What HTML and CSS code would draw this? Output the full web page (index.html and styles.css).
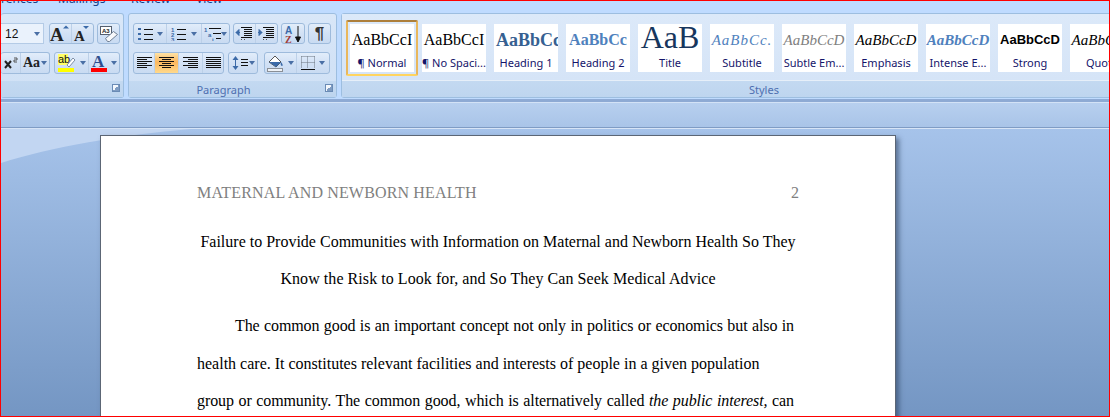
FILE: index.html
```html
<!DOCTYPE html>
<html lang="en">
<head>
  <meta charset="UTF-8" />
  <title>Maternal and Newborn Health - Word</title>
  <link rel="stylesheet" href="styles.css">
</head>
<body>
  <div class="app">
    <div class="tabs">
      <span class="tab tab-refs">rences</span>
      <span class="tab tab-mail">Mailings</span>
      <span class="tab tab-review">Review</span>
      <span class="tab tab-view">View</span>
    </div>

    <div class="ribbon">
      <div class="group group-font">
        <div class="rows">
          <div class="row row-top">
            <div class="size-box"><span>12</span><i class="caret"></i></div>
            <div class="btns btns-grow">
              <div class="btn w-22"><svg width="20" height="18" viewBox="0 0 20 18"><text x="0" y="16" class="glyph glyph-big">A</text><path d="M13 3.5h6L16 .5z" fill="#3b6aa8"/></svg></div>
              <div class="btn w-22"><svg width="18" height="18" viewBox="0 0 18 18"><text x="1" y="16" class="glyph glyph-mid">A</text><path d="M10 1h6l-3 3z" fill="#3b6aa8"/></svg></div>
            </div>
            <div class="btns btn-clear"><svg width="20" height="18" viewBox="0 0 20 18"><rect x="1.5" y="1.5" width="11" height="8" fill="#fff" stroke="#555f6e"/><text x="3" y="8" class="glyph glyph-tiny">A3</text><path d="M6.5 13.5l8-7 4 3-8 7h-2z" fill="#f7f8fa" stroke="#6f7f94"/></svg></div>
          </div>
          <div class="row row-bottom">
            <div class="btns btns-case">
              <div class="btn w-sup"><svg width="14" height="12" viewBox="0 0 14 12"><path d="M1 4l6 7M7 4l-6 7" stroke="#222" stroke-width="2"/><path d="M10 1h3v2h-3v2h3" fill="none" stroke="#555"/></svg></div>
              <div class="btn w-case"><span class="case-label">Aa</span><i class="caret"></i></div>
            </div>
            <div class="btns btns-colour">
              <div class="btn w-high">
                <svg width="18" height="19" viewBox="0 0 18 19"><rect x="0" y="0" width="10" height="11" fill="#ffff66"/><text x="0" y="9" class="glyph glyph-ab">ab</text><path d="M9 11l6-7 2 2-6 7z" fill="#fff" stroke="#7d8ea5"/><rect x="0" y="14" width="16" height="4" fill="#ffff00"/></svg>
                <i class="caret"></i>
              </div>
              <div class="btn w-colour">
                <svg width="16" height="19" viewBox="0 0 16 19"><text x="1" y="13" class="glyph glyph-color">A</text><rect x="0" y="14" width="16" height="4" fill="#ff0000"/></svg>
                <i class="caret"></i>
              </div>
            </div>
          </div>
        </div>
        <div class="group-label"><i class="launcher"></i></div>
      </div>

      <div class="group group-para">
        <div class="rows">
          <div class="row row-top">
            <div class="btns">
              <div class="btn w-bullets">
                <svg width="16" height="14" viewBox="0 0 16 14"><path d="M1 1h3v2H1zM1 6h3v2H1zM1 11h3v2H1z" fill="#3b6aa8"/><path d="M7 2.5h9M7 7.5h9M7 12.5h9" stroke="#111"/></svg>
                <i class="caret"></i>
              </div>
              <div class="btn w-numbers">
                <svg width="16" height="14" viewBox="0 0 16 14"><text x="0" y="5" class="glyph glyph-num">1</text><text x="0" y="10" class="glyph glyph-num">2</text><text x="0" y="15" class="glyph glyph-num">3</text><path d="M6 2.5h9M6 7.5h9M6 12.5h9" stroke="#111"/></svg>
                <i class="caret"></i>
              </div>
              <div class="btn w-multi">
                <svg width="17" height="14" viewBox="0 0 17 14"><text x="0" y="5" class="glyph glyph-num">1</text><text x="4" y="10" class="glyph glyph-num">a</text><text x="8" y="15" class="glyph glyph-num">i</text><path d="M5 1.5h12M9 6.5h8M12 11.5h5" stroke="#111"/></svg>
                <i class="caret caret-tight"></i>
              </div>
            </div>
            <div class="btns">
              <div class="btn w-22"><svg width="18" height="14" viewBox="0 0 18 14"><path d="M6 .5h11M9 2.5h8M9 4.5h8M9 6.5h8M9 8.5h8M6 10.5h11" stroke="#111"/><path d="M1 5.5h4M1 5.5l3-3v6z" fill="#3b6aa8" stroke="#3b6aa8"/><path d="M6 12.5h1M9 12.5h1" stroke="#555"/></svg></div>
              <div class="btn w-22"><svg width="18" height="14" viewBox="0 0 18 14"><path d="M6 .5h11M9 2.5h8M9 4.5h8M9 6.5h8M9 8.5h8M6 10.5h11" stroke="#111"/><path d="M1 5.5h4M5 5.5l-3-3v6z" fill="#3b6aa8" stroke="#3b6aa8"/><path d="M6 12.5h1M9 12.5h1" stroke="#555"/></svg></div>
            </div>
            <div class="btns btn-sort"><svg width="18" height="18" viewBox="0 0 18 18"><text x="1" y="9" class="glyph glyph-az-a">A</text><text x="1" y="18" class="glyph glyph-az-z">Z</text><path d="M14 1v15M11.5 12l2.5 5 2.5-5z" stroke="#111" fill="#111"/></svg></div>
            <div class="btns btn-pil"><span class="pilcrow">¶</span></div>
          </div>
          <div class="row row-bottom">
            <div class="btns">
              <div class="btn w-align"><svg width="15" height="12" viewBox="0 0 15 12"><path d="M0 .5h15M0 2.5h10M0 4.5h15M0 6.5h10M0 8.5h15M0 10.5h10" stroke="#111"/></svg></div>
              <div class="btn w-align-on"><svg width="15" height="12" viewBox="0 0 15 12"><path d="M0 .5h15M3 2.5h9M0 4.5h15M3 6.5h9M0 8.5h15M3 10.5h9" stroke="#111"/></svg></div>
              <div class="btn w-align-on-next"><svg width="15" height="12" viewBox="0 0 15 12"><path d="M0 .5h15M5 2.5h10M0 4.5h15M5 6.5h10M0 8.5h15M5 10.5h10" stroke="#111"/></svg></div>
              <div class="btn w-align-end"><svg width="15" height="12" viewBox="0 0 15 12"><path d="M0 .5h15M0 2.5h15M0 4.5h15M0 6.5h15M0 8.5h15M0 10.5h15" stroke="#111"/></svg></div>
            </div>
            <div class="btns">
              <div class="btn w-spacing">
                <svg width="16" height="16" viewBox="0 0 16 16"><path d="M3.5 1L.5 5h6zM3.5 15L.5 11h6z" fill="#3b6aa8"/><path d="M3.5 5v6" stroke="#3b6aa8"/><path d="M9 4.5h7M9 7.5h7M9 10.5h7" stroke="#111"/></svg>
                <i class="caret caret-tight"></i>
              </div>
            </div>
            <div class="btns btns-shade">
              <div class="btn w-shade">
                <svg width="17" height="18" viewBox="0 0 17 18"><path d="M2 8l6-6 6 6-5 5z" fill="#fff" stroke="#555"/><path d="M14 8c2 2 2 4 1 4s-2-2-1-4z" fill="#3b6aa8"/><path d="M2 8h12l-5 5z" fill="#3b6aa8"/><rect x="0.5" y="14.5" width="15" height="3" fill="#eef2f7" stroke="#8a8f96"/></svg>
                <i class="caret"></i>
              </div>
              <div class="btn w-border">
                <svg width="14" height="14" viewBox="0 0 14 14"><path d="M.5 .5h13M.5 6.5h13M.5 .5v12M6.5 .5v12M13.5 .5v12" fill="none" stroke="#6b7480" stroke-dasharray="1 1"/><path d="M0 13.5h14" stroke="#111"/></svg>
                <i class="caret"></i>
              </div>
            </div>
          </div>
        </div>
        <div class="group-label label-para">Paragraph<i class="launcher"></i></div>
      </div>

      <div class="group group-styles">
        <div class="gallery">
          <div class="style style-on"><div class="swatch"><div class="preview">AaBbCcI</div><div class="caption">¶ Normal</div></div></div>
          <div class="style"><div class="swatch"><div class="preview">AaBbCcI</div><div class="caption">¶ No Spaci...</div></div></div>
          <div class="style"><div class="swatch"><div class="preview p-h1">AaBbCc</div><div class="caption">Heading 1</div></div></div>
          <div class="style"><div class="swatch"><div class="preview p-h2">AaBbCc</div><div class="caption">Heading 2</div></div></div>
          <div class="style"><div class="swatch"><div class="preview p-title">AaB</div><div class="caption">Title</div></div></div>
          <div class="style"><div class="swatch"><div class="preview p-sub">AaBbCc.</div><div class="caption">Subtitle</div></div></div>
          <div class="style"><div class="swatch"><div class="preview p-subtle">AaBbCcD</div><div class="caption">Subtle Em...</div></div></div>
          <div class="style"><div class="swatch"><div class="preview p-em">AaBbCcD</div><div class="caption">Emphasis</div></div></div>
          <div class="style"><div class="swatch"><div class="preview p-intense">AaBbCcD</div><div class="caption">Intense E...</div></div></div>
          <div class="style"><div class="swatch"><div class="preview p-strong">AaBbCcD</div><div class="caption">Strong</div></div></div>
          <div class="style"><div class="swatch"><div class="preview p-em">AaBbCcD</div><div class="caption">Quote</div></div></div>
        </div>
        <div class="group-label label-styles">Styles</div>
      </div>
    </div>

    <div class="ruler-band"></div>

    <div class="workspace">
      <svg class="swoosh" width="260" height="40" viewBox="0 0 260 40"><path d="M0 0H190C120 6 50 18 0 34z" fill="#c2d6f2"/></svg>
      <div class="page">
        <div class="page-header"><span class="running-head">MATERNAL AND NEWBORN HEALTH</span><span>2</span></div>
        <div class="doc-title">
          <div class="title-line">Failure to Provide Communities with Information on Maternal and Newborn Health So They</div>
          <div class="title-line title-wide">Know the Risk to Look for, and So They Can Seek Medical Advice</div>
        </div>
        <div class="doc-body">
          <div class="line line-just line-indent">The common good is an important concept not only in politics or economics but also in</div>
          <div class="line">health care. It constitutes relevant facilities and interests of people in a given population</div>
          <div class="line line-just">group or community. The common good, which is alternatively called <em>the public interest,</em> can</div>
        </div>
      </div>
    </div>
  </div>
</body>
</html>
```

FILE: styles.css
```css
* {
  box-sizing: border-box;
}
html, body {
  margin: 0;
  height: 100%;
}
body {
  font-family: 'Liberation Serif', serif;
  background: #bfdbff;
}
.app {
  width: 1110px;
  height: 417px;
  border: 1px solid #ff0000;
  display: flex;
  flex-direction: column;
  overflow: hidden;
  background: #bfdbff;
}

/* tab strip, only the bottom of the text shows */
.tabs {
  height: 9px;
  flex: none;
  display: flex;
  overflow: hidden;
  font-family: 'Noto Sans', sans-serif;
  font-size: 12px;
  line-height: 14px;
  color: #15428b;
}
.tab {
  margin-top: -9px;
}
.tab-refs { width: 57px; }
.tab-mail { width: 73px; }
.tab-review { width: 65px; }

/* ribbon */
.ribbon {
  height: 89px;
  flex: none;
  display: flex;
  gap: 4px;
  padding-top: 3px;
}
.group {
  height: 85px;
  flex: none;
  display: flex;
  flex-direction: column;
  border: 1px solid #9dbee0;
  border-radius: 3px;
  background: linear-gradient(#d9e7f8, #d2e2f6 60%, #d0e1f5);
}
.group-font {
  width: 123px;
  border-left: none;
}
.group-para {
  width: 209px;
}
.group-styles {
  width: 790px;
}
.rows {
  flex: 1;
  padding-top: 9px;
  display: flex;
  flex-direction: column;
  gap: 8px;
}
.group-para .rows {
  padding-left: 4px;
}
.row {
  display: flex;
}
.row-top {
  height: 21px;
}
.row-bottom {
  height: 22px;
}
.group-font .row-top { gap: 5px; }
.group-font .row-bottom { gap: 4px; }
.group-para .row-top { gap: 3px; }
.group-para .row-bottom { gap: 4px; }
.group-label {
  height: 16px;
  flex: none;
  display: flex;
  justify-content: center;
  align-items: center;
  position: relative;
  font-family: 'Noto Sans', sans-serif;
  font-size: 11px;
  color: #4e6fb0;
  background: linear-gradient(#c3d9f1, #bed5ef);
}
.label-para {
  padding-right: 18px;
}
.launcher {
  position: absolute;
  right: 3px;
  top: 3px;
  width: 8px;
  height: 8px;
  border: 1px solid #6a8bb5;
  background: linear-gradient(135deg, #f3f7fc 50%, #7f9cc2 50%);
}

/* buttons */
.btns {
  display: flex;
  border: 1px solid #9ebbdc;
  border-radius: 3px;
  background: linear-gradient(#e2edfa, #d2e1f5 50%, #c9dbf2);
}
.btn {
  display: flex;
  align-items: center;
  justify-content: center;
  gap: 3px;
  border-right: 1px solid #bcd0e8;
}
.btn:last-child {
  border-right: none;
}
.caret {
  width: 0;
  height: 0;
  margin-left: 4px;
  border-left: 3.5px solid transparent;
  border-right: 3.5px solid transparent;
  border-top: 4px solid #4a6fa5;
}
.caret-tight {
  margin-left: 0;
}
.glyph {
  font-family: 'Liberation Serif', serif;
  font-weight: bold;
}
.glyph-big { font-size: 19px; fill: #222; }
.glyph-mid { font-size: 15px; fill: #222; }
.glyph-tiny { font-family: 'Liberation Sans', sans-serif; font-size: 6px; fill: #222; font-weight: bold; }
.glyph-ab { font-family: 'Liberation Sans', sans-serif; font-size: 11px; fill: #111; font-weight: normal; }
.glyph-color { font-size: 17px; fill: #2f4f8f; }
.glyph-num { font-family: 'Liberation Sans', sans-serif; font-size: 6px; fill: #3b6aa8; }
.glyph-az-a { font-family: 'Liberation Sans', sans-serif; font-size: 10px; fill: #3b6aa8; }
.glyph-az-z { font-size: 10px; fill: #a03a3a; }
.size-box {
  width: 43px;
  display: flex;
  align-items: center;
  justify-content: space-between;
  padding: 0 3px 0 4px;
  border: 1px solid #b4cbe6;
  border-left: none;
  background: #eaf2fc;
  font-family: 'Liberation Sans', sans-serif;
  font-size: 12px;
  color: #111;
}
.w-22 { width: 21.5px; }
.btns-grow { width: 45px; }
.btn-clear { width: 23px; align-items: center; justify-content: center; margin-left: -2px; }
.btns-case { width: 49px; border-left: none; }
.w-sup { width: 20px; }
.w-case { width: 28px; gap: 0; }
.case-label {
  font-family: 'Liberation Serif', serif;
  font-weight: bold;
  font-size: 14px;
  color: #222;
}
.w-case .caret { margin-left: 1px; }
.btns-colour { width: 66px; }
.w-high { width: 34px; gap: 0; }
.w-colour { width: 30px; gap: 0; }
.w-bullets { width: 33px; gap: 0; }
.w-numbers { width: 35px; gap: 0; }
.w-multi { width: 27px; gap: 0; }
.btn-sort { width: 24px; align-items: center; justify-content: center; }
.btn-pil { width: 23px; align-items: center; justify-content: center; }
.pilcrow {
  font-family: 'Liberation Sans', sans-serif;
  font-size: 17px;
  font-weight: bold;
  color: #333;
}
.w-align { width: 21px; }
.w-align-on { width: 24px; background: linear-gradient(#ffe3a6, #fbb75e 45%, #ffd98c); }
.w-align-on-next { width: 24px; }
.w-align-end { width: 20px; }
.w-spacing { width: 28px; gap: 1px; }
.btns-shade { margin-left: 2px; }
.w-shade { width: 32px; gap: 0; }
.w-border { width: 32px; gap: 0; }

/* styles gallery */
.gallery {
  flex: 1;
  display: flex;
  padding: 6px 0 0 4px;
  background: linear-gradient(#dce9f9, #d5e4f7);
  border-bottom: 1px solid #e6eff9;
  box-shadow: 0 1px 0 #b2cbe6;
}
.style {
  width: 72px;
  height: 56px;
  padding: 4px;
  flex: none;
}
.style-on {
  border: 2px solid;
  border-color: #ad7f3b #e9b75c #ffd45f #e9b75c;
  border-radius: 2px;
  padding: 2px;
}
.swatch {
  height: 48px;
  background: #fff;
  display: flex;
  flex-direction: column;
  overflow: hidden;
}
.preview {
  height: 26px;
  flex: none;
  display: flex;
  align-items: flex-end;
  justify-content: center;
  overflow: hidden;
  white-space: nowrap;
  font-size: 16px;
  line-height: 20px;
  color: #000;
}
.p-h1 { justify-content: flex-start; padding-left: 2px; font-weight: bold; color: #366091; font-size: 18px; }
.p-h2 { font-weight: bold; color: #4f81bd; font-size: 16px; }
.p-title { font-size: 32px; line-height: 26px; color: #17365d; }
.p-sub { font-style: italic; color: #4f81bd; font-size: 15px; letter-spacing: 1px; }
.p-subtle { font-style: italic; color: #808080; font-size: 15px; }
.p-em { font-style: italic; font-size: 15px; }
.p-intense { font-style: italic; font-weight: bold; color: #4f81bd; font-size: 15px; }
.p-strong { font-family: 'Liberation Sans', sans-serif; font-weight: bold; font-size: 13px; }
.caption {
  margin-top: 6px;
  text-align: center;
  white-space: nowrap;
  font-family: 'Noto Sans', sans-serif;
  font-size: 11px;
  line-height: 14px;
  color: #14146a;
}
.label-styles {
  justify-content: flex-start;
  padding-left: 407px;
}

/* band between ribbon and document */
.ruler-band {
  height: 29px;
  flex: none;
  border-top: 3px solid #8eaad4;
  border-bottom: 1px solid #7f9cc4;
  background: linear-gradient(#b8d0ef, #a9c4e8);
  box-shadow: inset 0 1px 0 #d3e2f6;
}

/* document area */
.workspace {
  flex: 1;
  position: relative;
  overflow: hidden;
  padding: 6px 0 0 99px;
  background: linear-gradient(#a6c3ea, #7496c3);
  border-top: 1px solid #d7e4f6;
}
.swoosh {
  position: absolute;
  left: 0;
  top: 0;
}
.page {
  position: relative;
  width: 796px;
  height: 400px;
  padding: 47px 0 0 96px;
  background: #fff;
  border-top: 1px solid #5c6675;
  border-left: 1px solid #5c6675;
  border-right: 1px solid #5c6675;
  box-shadow: 3px 3px 5px rgba(40, 60, 90, 0.6);
  font-size: 16px;
  color: #000;
}
.page-header {
  width: 602px;
  height: 20px;
  display: flex;
  justify-content: space-between;
  line-height: 20px;
  color: #808080;
}
.running-head {
  letter-spacing: 0.15px;
}
.doc-title {
  width: 602px;
  margin-top: 20px;
  text-align: center;
}
.title-line {
  line-height: 37px;
  white-space: nowrap;
}
.title-wide {
  letter-spacing: 0.06px;
}
.doc-body {
  width: 597px;
  margin-top: 10px;
}
.line {
  line-height: 37.5px;
  white-space: nowrap;
}
.line-just {
  white-space: normal;
  text-align: justify;
  text-align-last: justify;
  letter-spacing: -0.1px;
}
.line-indent {
  padding-left: 38px;
}
```
